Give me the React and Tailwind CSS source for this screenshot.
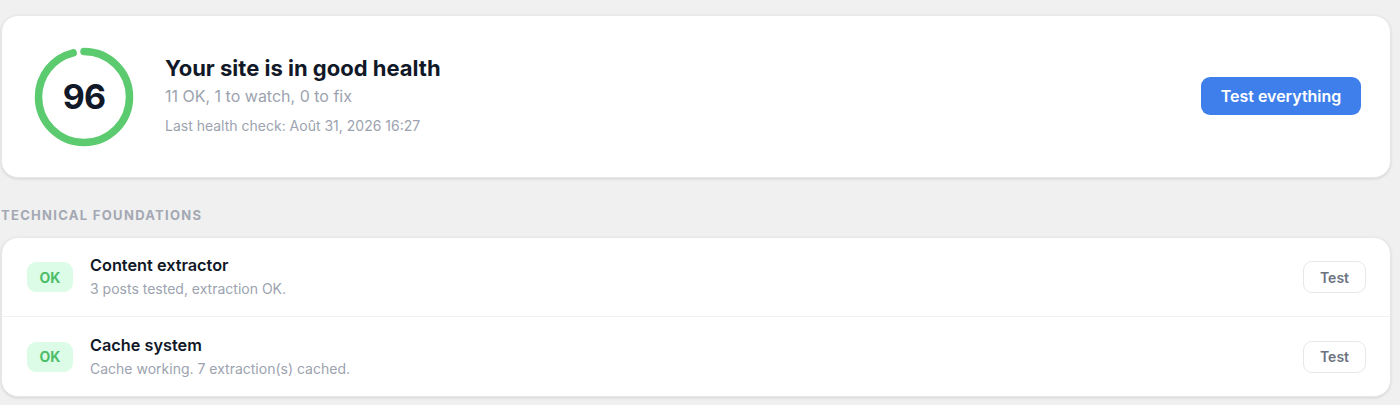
import React from "react";

function Ring({ score }) {
  const r = 45.5;
  const c = 2 * Math.PI * r;
  return (
    <div className="relative w-[100px] h-[100px] shrink-0">
      <svg width="100" height="100" viewBox="0 0 100 100" className="-rotate-90">
        <circle
          cx="50"
          cy="50"
          r={r}
          fill="none"
          stroke="#5ccb70"
          strokeWidth="7.5"
          strokeLinecap="round"
          strokeDasharray={`${(c * score) / 100} ${c}`}
        />
      </svg>
      <div className="absolute inset-0 flex items-center justify-center text-[34px] font-bold text-[#111827] tracking-tight">
        {score}
      </div>
    </div>
  );
}

function Row({ title, desc, last }) {
  return (
    <div className={`flex items-center h-[79px] pl-[25px] pr-[24px] ${last ? "" : "border-b border-[#f0f0f0]"}`}>
      <div className="w-[46px] h-[30px] rounded-[9px] bg-[#dcfce7] text-[#4cbd68] text-[14px] font-bold flex items-center justify-center">
        OK
      </div>
      <div className="ml-[17px] flex-1 -mt-[1px]">
        <div className="text-[16.3px] font-semibold text-[#111827] leading-[20px]">{title}</div>
        <div className="text-[14px] text-[#9ca3af] leading-[18px] mt-[5px]">{desc}</div>
      </div>
      <button className="w-[63px] h-[32px] rounded-[9px] border border-[#e5e7eb] bg-white text-[14px] font-semibold text-[#6b7280]">
        Test
      </button>
    </div>
  );
}

export default function App() {
  return (
    <div
      className="w-[1400px] h-[405px] bg-[#f0f0f0] overflow-hidden"
      style={{ fontFamily: "Inter, 'Noto Sans', sans-serif" }}
    >
      <div className="w-[1390px] ml-[1px] pt-[15px]">
        <div className="bg-white rounded-[17px] shadow-[0_1px_3px_rgba(0,0,0,0.12)] border border-[#e8e8e8] h-[163px] flex items-center pl-[32px] pr-[29px]">
          <Ring score={96} />
          <div className="ml-[31px] flex-1 -mt-[4px]">
            <div className="text-[22px] font-bold text-[#111827] leading-[28px]">Your site is in good health</div>
            <div className="text-[16px] text-[#9ca3af] leading-[20px] mt-[4px]">11 OK, 1 to watch, 0 to fix</div>
            <div className="text-[14px] text-[#9ca3af] leading-[18px] mt-[11px]">Last health check: Août 31, 2026 16:27</div>
          </div>
          <button className="w-[160px] h-[38px] rounded-[9px] bg-[#3f7fec] text-white text-[16px] font-semibold -mt-[2px]">
            Test everything
          </button>
        </div>

        <div className="mt-[29px] text-[13px] font-bold tracking-[0.1em] text-[#a3a8b3] leading-[16px]">
          TECHNICAL FOUNDATIONS
        </div>

        <div className="mt-[14px] bg-white rounded-[17px] shadow-[0_1px_3px_rgba(0,0,0,0.12)] border border-[#e8e8e8] overflow-hidden">
          <Row title="Content extractor" desc="3 posts tested, extraction OK." />
          <Row title="Cache system" desc="Cache working. 7 extraction(s) cached." last />
        </div>
      </div>
    </div>
  );
}
